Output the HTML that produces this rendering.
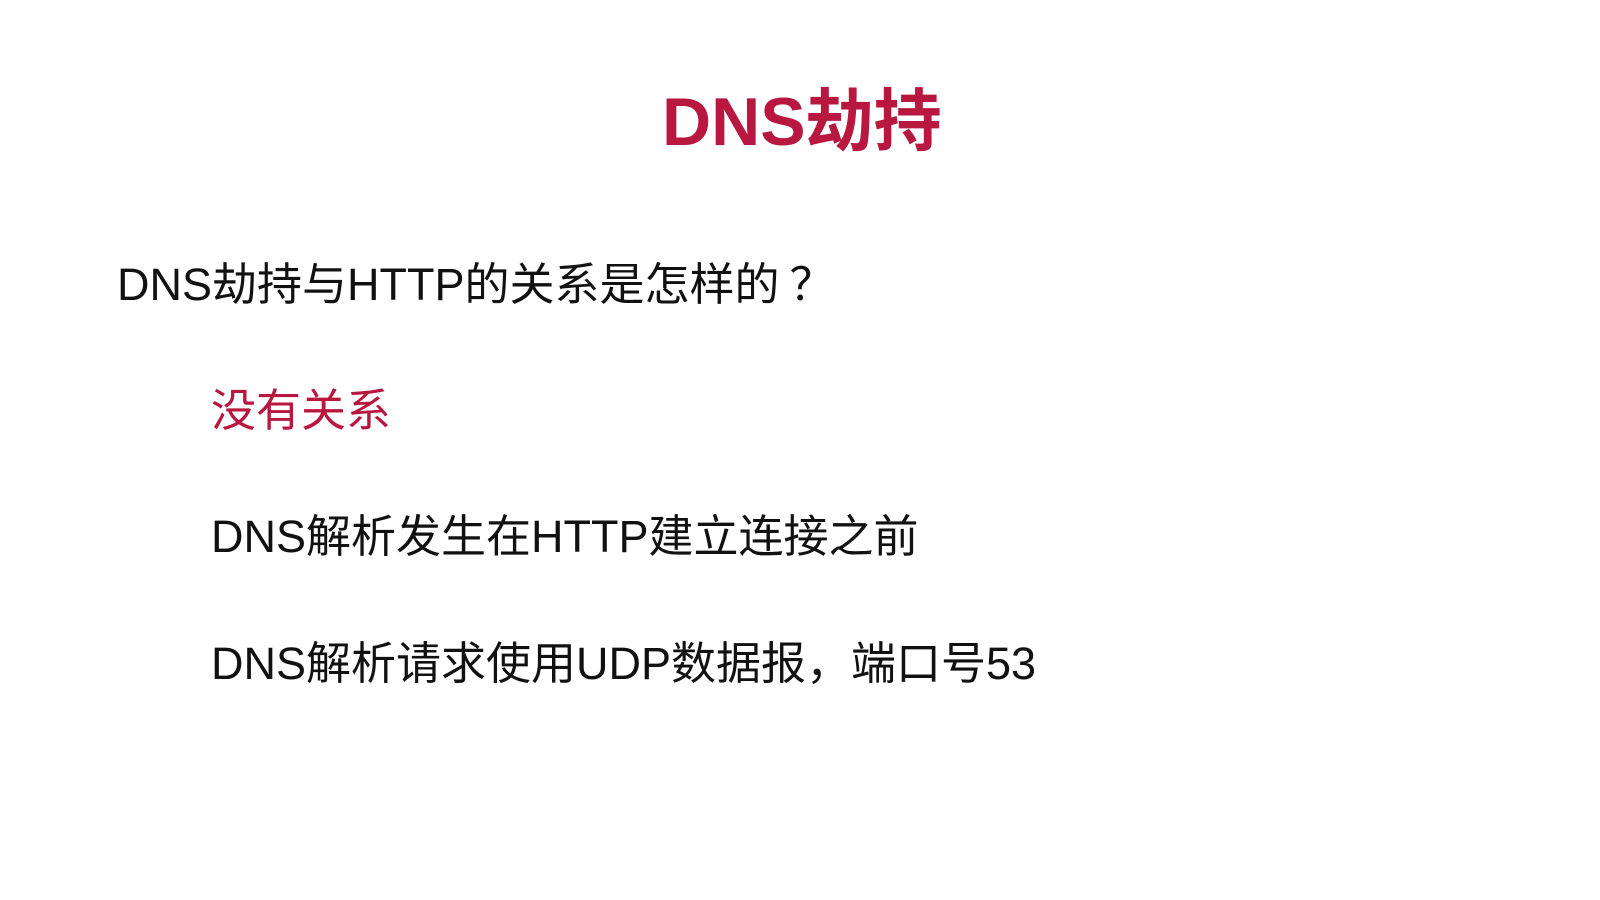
<!DOCTYPE html>
<html><head><meta charset="utf-8"><style>
html,body{margin:0;padding:0;background:#fff;width:1600px;height:900px;overflow:hidden}
.t{position:absolute;white-space:nowrap;font-family:"Liberation Sans","Noto Sans CJK SC",sans-serif;line-height:1}
</style></head><body>
<div class="t" style="left:662px;top:88px;font-size:68px;font-weight:bold;color:#b8173f">DNS劫持</div>
<div class="t" style="left:117px;top:258px;font-size:45px;color:#111">DNS劫持与HTTP的关系是怎样的<span style="font-family:'Noto Sans CJK SC',sans-serif;padding-left:10px">？</span></div>
<div class="t" style="left:211px;top:388px;font-size:45px;color:#b8173f">没有关系</div>
<div class="t" style="left:211px;top:514px;font-size:45px;color:#111">DNS解析发生在HTTP建立连接之前</div>
<div class="t" style="left:211px;top:641px;font-size:45px;color:#111">DNS解析请求使用UDP数据报，端口号53</div>
</body></html>
